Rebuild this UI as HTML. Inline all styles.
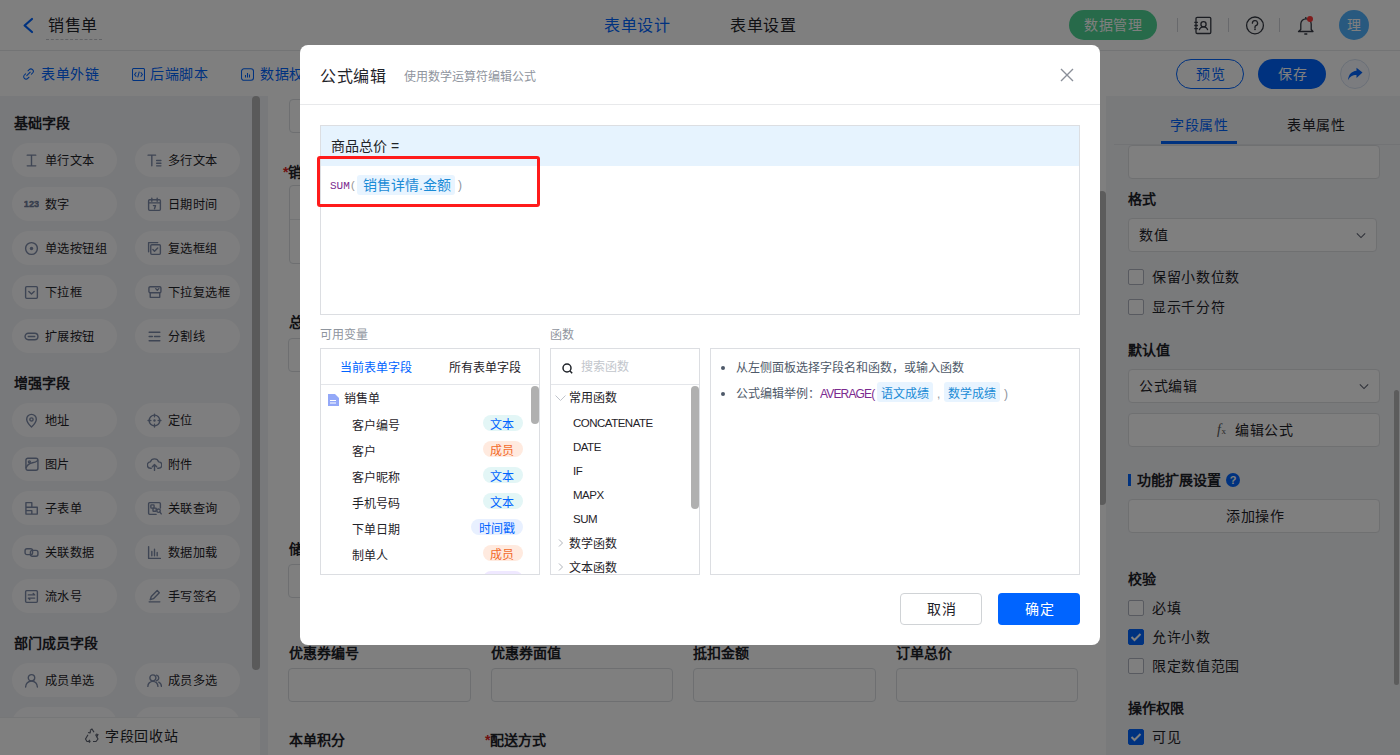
<!DOCTYPE html>
<html lang="zh-CN"><head><meta charset="utf-8">
<style>
*{box-sizing:border-box;margin:0;padding:0}
html,body{width:1400px;height:755px;overflow:hidden}
body{position:relative;font-family:"Liberation Sans",sans-serif;font-size:14px;color:#1f2329;background:#fff}
.abs{position:absolute}
.t{position:absolute;white-space:nowrap;line-height:1}
#hdr{left:0;top:0;width:1400px;height:51px;background:#fff;border-bottom:1px solid #e6e8eb}
#tb{left:0;top:51px;width:1400px;height:45px;background:#fff}
#side{left:0;top:96px;width:268px;height:659px;background:#f1f2f6}
#canvas{left:268px;top:95px;width:838px;height:660px;background:#fff}
#card{display:none}
#right{left:1106px;top:96px;width:294px;height:659px;background:#f2f4f7}
.chip{position:absolute;width:105px;height:34px;border-radius:17px;background:#fdfdfe}
.chip .ic{position:absolute;left:12px;top:9.5px;width:15px;height:15px}
.chip .tx{position:absolute;left:33px;top:11px;font-size:12.2px;letter-spacing:.4px;line-height:14px;color:#1f2329;white-space:nowrap}
.stitle{position:absolute;left:14px;font-size:14px;font-weight:bold;color:#1f2329;line-height:14px}
.inp{position:absolute;border:1px solid #dcdfe3;border-radius:4px;background:#fff}
.flabel{position:absolute;font-size:14px;font-weight:bold;line-height:14px;color:#1f2329;white-space:nowrap}
.req{color:#e02020}
.rlabel{position:absolute;left:1128px;font-size:14px;font-weight:bold;line-height:14px;color:#1f2329}
.rbox{position:absolute;left:1128px;width:252px;height:34px;border:1px solid #dee0e3;border-radius:4px;background:#fff}
.rbox .v{position:absolute;left:10px;top:8px;font-size:14px;letter-spacing:.045em;line-height:16px;color:#1f2329}
.chev{position:absolute;right:10px;top:13px;width:10px;height:7px}
.cb{position:absolute;left:1128px;width:16px;height:16px;border:1px solid #b0b5c0;border-radius:2px;background:#fff}
.cb.on{background:#0064ff;border-color:#0064ff}
.cbt{position:absolute;left:1152px;font-size:14px;letter-spacing:.045em;line-height:16px;color:#1f2329;white-space:nowrap}
#mask{left:0;top:0;width:1400px;height:755px;background:rgba(0,0,0,.5)}
#modal{left:300px;top:45px;width:800px;height:600px;background:#fff;border-radius:8px}
</style></head><body>
<!-- header -->
<div id="hdr" class="abs">
 <svg class="abs" style="left:22px;top:17px" width="13" height="17" viewBox="0 0 13 17"><path d="M10 2L2.6 8.5 10 15" fill="none" stroke="#0064ff" stroke-width="2.2" stroke-linecap="round" stroke-linejoin="round"/></svg>
 <div class="t" style="left:48px;top:18px;font-size:16px;color:#1f2329;letter-spacing:.045em">销售单</div>
 <div class="abs" style="left:46px;top:39px;width:56px;border-top:1px dashed #c4c7cc"></div>
 <div class="t" style="left:604px;top:18px;font-size:16px;color:#0064ff;letter-spacing:.045em">表单设计</div>
 <div class="t" style="left:730px;top:18px;font-size:16px;color:#1f2329;letter-spacing:.045em">表单设置</div>
 <div class="abs" style="left:1069px;top:10px;width:88px;height:30px;border-radius:15px;background:#4ed494"></div>
 <div class="t" style="left:1084px;top:18px;font-size:14px;color:#fff;letter-spacing:.045em">数据管理</div>
 <div class="abs" style="left:1177px;top:18px;width:1px;height:14px;background:#d0d3d8"></div>
 <div class="abs" style="left:1228px;top:18px;width:1px;height:14px;background:#d0d3d8"></div>
 <div class="abs" style="left:1279px;top:18px;width:1px;height:14px;background:#d0d3d8"></div>
 <svg class="abs" style="left:1192px;top:15px" width="21" height="21" viewBox="0 0 21 21" fill="none" stroke="#363a44" stroke-width="1.3"><rect x="4" y="2.3" width="14.8" height="16.2" rx="1.2"/><circle cx="11.5" cy="9.3" r="2.6"/><path d="M7.3 15.2c.5-2.3 2.2-3.4 4.2-3.4s3.7 1.1 4.2 3.4M2.3 7.3h3.6M2.3 10.5h3.6M2.3 13.7h3.6"/></svg>
 <svg class="abs" style="left:1245px;top:16px" width="20" height="20" viewBox="0 0 20 20" fill="none" stroke="#363a44" stroke-width="1.3"><circle cx="10" cy="9.4" r="8.4"/><path d="M7.4 7.2a2.6 2.6 0 1 1 3.5 2.4c-.6.3-.9.7-.9 1.3v1" stroke-linecap="round"/><circle cx="10" cy="13.4" r=".8" fill="#363a44" stroke="none"/></svg>
 <svg class="abs" style="left:1295px;top:14px" width="22" height="22" viewBox="0 0 22 22" fill="none" stroke="#363a44" stroke-width="1.3"><path d="M3.5 17.5h14.5l-1.8-2V10a5.2 5.2 0 0 0-10.4 0v5.5z" stroke-linejoin="round"/><path d="M9.3 20h3M10.8 3v1.7"/><circle cx="15" cy="5" r="3" fill="#ff3838" stroke="none"/></svg>
 <div class="abs" style="left:1339px;top:10px;width:30px;height:30px;border-radius:15px;background:#50b2fe"></div>
 <div class="t" style="left:1347px;top:18px;font-size:14px;color:#fff;letter-spacing:.045em">理</div>
</div>
<!-- toolbar -->
<div id="tb" class="abs">
 <svg class="abs" style="left:22px;top:16px" width="13" height="14" viewBox="0 0 13 14" fill="none" stroke="#0064ff" stroke-width="1.05" stroke-linecap="round"><path d="M4.8 8.6L8.2 5.2"/><path d="M6 3.8l1.2-1.2a2.4 2.4 0 0 1 3.4 3.4L9.4 7.2M7 10.2l-1.2 1.2a2.4 2.4 0 0 1-3.4-3.4L3.6 6.8"/></svg>
 <div class="t" style="left:41px;top:16px;font-size:14px;color:#0064ff;letter-spacing:.045em">表单外链</div>
 <svg class="abs" style="left:132px;top:17px" width="13" height="13" viewBox="0 0 13 13" fill="none" stroke="#0064ff" stroke-width="1.05"><rect x=".5" y=".5" width="12" height="12" rx="1.2"/><path d="M4.3 4.3L2.6 6.5l1.7 2.2M8.7 4.3l1.7 2.2-1.7 2.2M7.3 3.6L5.7 9.4"/></svg>
 <div class="t" style="left:150px;top:16px;font-size:14px;color:#0064ff;letter-spacing:.045em">后端脚本</div>
 <svg class="abs" style="left:241px;top:17px" width="13" height="13" viewBox="0 0 13 13" fill="none" stroke="#0064ff" stroke-width="1.05"><rect x=".5" y=".8" width="12" height="11.5" rx="2.5"/><path d="M4.5 9.5V7M6.5 9.5V5M8.5 9.5V6.5"/></svg>
 <div class="t" style="left:260px;top:16px;font-size:14px;color:#0064ff;letter-spacing:.045em">数据权限</div>
 <div class="abs" style="left:1176px;top:8px;width:68px;height:30px;border:1px solid #0064ff;border-radius:15px;background:#fff"></div>
 <div class="t" style="left:1196px;top:16px;font-size:14px;color:#0064ff;letter-spacing:.045em">预览</div>
 <div class="abs" style="left:1258px;top:8px;width:68px;height:30px;border-radius:15px;background:#0064ff"></div>
 <div class="t" style="left:1278px;top:16px;font-size:14px;color:#fff;letter-spacing:.045em">保存</div>
 <div class="abs" style="left:1340px;top:8px;width:30px;height:30px;border:1px solid #d6e0f0;border-radius:15px;background:#f6f9ff"></div>
 <svg class="abs" style="left:1346px;top:15px" width="18" height="16" viewBox="0 0 18 16"><path d="M10.5 1.7L16.5 6.6 10.5 12V9C6.3 9 4 10.6 2 14.2 2.5 8.6 5.5 5.3 10.5 4.8z" fill="#0064ff"/></svg>
</div>
<!-- sidebar -->
<div id="side" class="abs"></div>
<div class="abs" style="left:252px;top:96px;width:8px;height:574px;border-radius:4px;background:#b5b5b5"></div>
<div class="stitle" style="top:116px">基础字段</div>
<div class="chip" style="left:12px;top:143px"><svg class="ic" viewBox="0 0 14 14" fill="none" stroke="#7d8aa8" stroke-width="1.3" stroke-linecap="round" stroke-linejoin="round"><path d="M3 2h8M3 12h8M7 2v10" /></svg><span class="tx">单行文本</span></div>
<div class="chip" style="left:135px;top:143px"><svg class="ic" viewBox="0 0 14 14" fill="none" stroke="#7d8aa8" stroke-width="1.3" stroke-linecap="round" stroke-linejoin="round"><path d="M1 2h7M4.5 2v10M9 7h4M9 9.5h4M9 12h4" /></svg><span class="tx">多行文本</span></div>
<div class="chip" style="left:12px;top:187px"><svg class="ic" viewBox="0 0 14 14" fill="none" stroke="#7d8aa8" stroke-width="1.3" stroke-linecap="round" stroke-linejoin="round"><text x="-0.2" y="9.5" font-size="8.6" font-weight="bold" fill="#6e7b99" stroke="#6e7b99" stroke-width="0.35" font-family="Liberation Sans">123</text></svg><span class="tx">数字</span></div>
<div class="chip" style="left:135px;top:187px"><svg class="ic" viewBox="0 0 14 14" fill="none" stroke="#7d8aa8" stroke-width="1.3" stroke-linecap="round" stroke-linejoin="round"><rect x="1.5" y="2.5" width="11" height="10" rx="1"/><path d="M1.5 5.5h11M4.5 1v3M9.5 1v3M6 8h2l-1 3"/></svg><span class="tx">日期时间</span></div>
<div class="chip" style="left:12px;top:231px"><svg class="ic" viewBox="0 0 14 14" fill="none" stroke="#7d8aa8" stroke-width="1.3" stroke-linecap="round" stroke-linejoin="round"><circle cx="7" cy="7" r="5.5"/><circle cx="7" cy="7" r="1.6" fill="#7d8aa8" stroke="none"/></svg><span class="tx">单选按钮组</span></div>
<div class="chip" style="left:135px;top:231px"><svg class="ic" viewBox="0 0 14 14" fill="none" stroke="#7d8aa8" stroke-width="1.3" stroke-linecap="round" stroke-linejoin="round"><path d="M1.5 10V1.5H10"/><rect x="3.5" y="3.5" width="9" height="9" rx="1"/><path d="M5.5 8l1.5 1.5 3-3"/></svg><span class="tx">复选框组</span></div>
<div class="chip" style="left:12px;top:275px"><svg class="ic" viewBox="0 0 14 14" fill="none" stroke="#7d8aa8" stroke-width="1.3" stroke-linecap="round" stroke-linejoin="round"><rect x="1.5" y="1.5" width="11" height="11" rx="1"/><path d="M4.5 6l2.5 2.5L9.5 6"/></svg><span class="tx">下拉框</span></div>
<div class="chip" style="left:135px;top:275px"><svg class="ic" viewBox="0 0 14 14" fill="none" stroke="#7d8aa8" stroke-width="1.3" stroke-linecap="round" stroke-linejoin="round"><rect x="1.8" y="1.6" width="11.2" height="5.6" rx="1.2"/><path d="M8.2 3.4l1.4 1.6 1.4-1.6M3 7.2v4.3h8.9V7.2"/></svg><span class="tx">下拉复选框</span></div>
<div class="chip" style="left:12px;top:319px"><svg class="ic" viewBox="0 0 14 14" fill="none" stroke="#7d8aa8" stroke-width="1.3" stroke-linecap="round" stroke-linejoin="round"><rect x="1" y="4" width="12" height="6" rx="3"/><path d="M4 7h6"/></svg><span class="tx">扩展按钮</span></div>
<div class="chip" style="left:135px;top:319px"><svg class="ic" viewBox="0 0 14 14" fill="none" stroke="#7d8aa8" stroke-width="1.3" stroke-linecap="round" stroke-linejoin="round"><path d="M2 3h10M2 7h3M7 7h5M2 11h10"/></svg><span class="tx">分割线</span></div>
<div class="stitle" style="top:376px">增强字段</div>
<div class="chip" style="left:12px;top:403px"><svg class="ic" viewBox="0 0 14 14" fill="none" stroke="#7d8aa8" stroke-width="1.3" stroke-linecap="round" stroke-linejoin="round"><path d="M7 13s-4.5-4.2-4.5-7.2A4.5 4.5 0 0 1 11.5 5.8C11.5 8.8 7 13 7 13z"/><circle cx="7" cy="6" r="1.5"/></svg><span class="tx">地址</span></div>
<div class="chip" style="left:135px;top:403px"><svg class="ic" viewBox="0 0 14 14" fill="none" stroke="#7d8aa8" stroke-width="1.3" stroke-linecap="round" stroke-linejoin="round"><circle cx="7" cy="7" r="5"/><circle cx="7" cy="7" r="1.1" fill="#7d8aa8" stroke="none"/><path d="M7 1v2.6M7 10.4V13M1 7h2.6M10.4 7H13"/></svg><span class="tx">定位</span></div>
<div class="chip" style="left:12px;top:447px"><svg class="ic" viewBox="0 0 14 14" fill="none" stroke="#7d8aa8" stroke-width="1.3" stroke-linecap="round" stroke-linejoin="round"><rect x="1.8" y="1.2" width="11.2" height="11.2" rx="1.8"/><path d="M2 10c1.5-3.5 3.5-4.2 6-4.6 2-.3 3.5-.8 4.6-2"/><circle cx="5" cy="4.5" r=".9"/></svg><span class="tx">图片</span></div>
<div class="chip" style="left:135px;top:447px"><svg class="ic" viewBox="0 0 14 14" fill="none" stroke="#7d8aa8" stroke-width="1.3" stroke-linecap="round" stroke-linejoin="round"><path d="M4 10.5H3.5a3 3 0 0 1-.3-6 4 4 0 0 1 7.6 0 3 3 0 0 1 0 6H10M7 7v5.5M5 9l2-2 2 2"/></svg><span class="tx">附件</span></div>
<div class="chip" style="left:12px;top:491px"><svg class="ic" viewBox="0 0 14 14" fill="none" stroke="#7d8aa8" stroke-width="1.3" stroke-linecap="round" stroke-linejoin="round"><path d="M1.8 12.2V1.5h5.5v4.3M1.8 5.8h10.6v6.4H1.8M1.8 9h5.5v3.2"/></svg><span class="tx">子表单</span></div>
<div class="chip" style="left:135px;top:491px"><svg class="ic" viewBox="0 0 14 14" fill="none" stroke="#7d8aa8" stroke-width="1.3" stroke-linecap="round" stroke-linejoin="round"><path d="M12.5 6.5V2.5a1 1 0 0 0-1-1h-9a1 1 0 0 0-1 1v9a1 1 0 0 0 1 1h6"/><rect x="3.6" y="3.6" width="3" height="3" rx=".5"/><rect x="5.6" y="6.6" width="3" height="3" rx=".5"/><circle cx="10.8" cy="9" r="1.6"/><path d="M12 10.3l1.3 1.7"/></svg><span class="tx">关联查询</span></div>
<div class="chip" style="left:12px;top:535px"><svg class="ic" viewBox="0 0 14 14" fill="none" stroke="#7d8aa8" stroke-width="1.3" stroke-linecap="round" stroke-linejoin="round"><rect x="1" y="3.5" width="7" height="5.5" rx="1.8"/><rect x="6" y="5" width="7" height="5.5" rx="1.8"/></svg><span class="tx">关联数据</span></div>
<div class="chip" style="left:135px;top:535px"><svg class="ic" viewBox="0 0 14 14" fill="none" stroke="#7d8aa8" stroke-width="1.3" stroke-linecap="round" stroke-linejoin="round"><path d="M1.5 1.5v11h11M4.5 10V6M7 10V4M9.5 10V7"/></svg><span class="tx">数据加载</span></div>
<div class="chip" style="left:12px;top:579px"><svg class="ic" viewBox="0 0 14 14" fill="none" stroke="#7d8aa8" stroke-width="1.3" stroke-linecap="round" stroke-linejoin="round"><rect x="1.5" y="1.5" width="11" height="11" rx="1"/><path d="M4 5.5h6L8.6 4.1M10 8.5H4l1.4 1.4"/></svg><span class="tx">流水号</span></div>
<div class="chip" style="left:135px;top:579px"><svg class="ic" viewBox="0 0 14 14" fill="none" stroke="#7d8aa8" stroke-width="1.3" stroke-linecap="round" stroke-linejoin="round"><path d="M2 12h10M3 10l1-3 5.5-5.5 2 2L6 9z"/></svg><span class="tx">手写签名</span></div>
<div class="stitle" style="top:636px">部门成员字段</div>
<div class="chip" style="left:12px;top:663px"><svg class="ic" viewBox="0 0 14 14" fill="none" stroke="#7d8aa8" stroke-width="1.3" stroke-linecap="round" stroke-linejoin="round"><circle cx="7" cy="4.5" r="3"/><path d="M1.5 13a5.5 5.5 0 0 1 11 0"/></svg><span class="tx">成员单选</span></div>
<div class="chip" style="left:135px;top:663px"><svg class="ic" viewBox="0 0 14 14" fill="none" stroke="#7d8aa8" stroke-width="1.3" stroke-linecap="round" stroke-linejoin="round"><circle cx="5.5" cy="4.5" r="2.8"/><path d="M0.8 12.5a4.7 4.7 0 0 1 9.4 0M9 2a2.7 2.7 0 0 1 0 5.2M11 8.5a4.5 4.5 0 0 1 2.5 4"/></svg><span class="tx">成员多选</span></div>
<div class="chip" style="left:12px;top:707px"><svg class="ic" viewBox="0 0 14 14" fill="none" stroke="#7d8aa8" stroke-width="1.3" stroke-linecap="round" stroke-linejoin="round"><circle cx="7" cy="4.5" r="3"/></svg><span class="tx">部门单选</span></div>
<div class="chip" style="left:135px;top:707px"><svg class="ic" viewBox="0 0 14 14" fill="none" stroke="#7d8aa8" stroke-width="1.3" stroke-linecap="round" stroke-linejoin="round"><circle cx="7" cy="4.5" r="3"/></svg><span class="tx">部门多选</span></div>
<div class="abs" style="left:0;top:717px;width:260px;height:38px;background:#fff;border-top:1px solid #eceef1"></div>
<svg class="abs" style="left:84px;top:728px" width="16" height="15" viewBox="0 0 16 15" fill="none" stroke="#5d6270" stroke-width="1.2" stroke-linejoin="round"><path d="M6 2.5l2-1.5 2 3.2M11.5 6.5l2.5 4.5-2 2.5H9M6.5 13.5H3L1.5 11l2.5-4.3M4 4.5l2 .5.5-2M12.5 9.5l1.5-3-2-.5M6 11.8l-1.5 1.5 1.5 1.2"/></svg>
<div class="t" style="left:105px;top:729px;font-size:14px;color:#1f2329;letter-spacing:.045em">字段回收站</div>
<!-- canvas -->
<div id="canvas" class="abs"></div>
<div id="card" class="abs"></div>
<div class="inp" style="left:289px;top:99px;width:200px;height:34px"></div>
<div class="flabel" style="left:283px;top:165px"><span class="req">*</span>销售详情</div>
<div class="inp" style="left:289px;top:185px;width:790px;height:79px"></div>
<div class="abs" style="left:290px;top:219px;width:788px;height:1px;background:#e6e8eb"></div>
<div class="flabel" style="left:289px;top:315px">总价</div>
<div class="inp" style="left:288px;top:338px;width:183px;height:34px"></div>
<div class="flabel" style="left:289px;top:542px">储值</div>
<div class="inp" style="left:288px;top:564px;width:183px;height:34px"></div>
<div class="flabel" style="left:289px;top:646px">优惠券编号</div>
<div class="flabel" style="left:491px;top:646px">优惠券面值</div>
<div class="flabel" style="left:693px;top:646px">抵扣金额</div>
<div class="flabel" style="left:896px;top:646px">订单总价</div>
<div class="inp" style="left:288px;top:668px;width:183px;height:34px"></div>
<div class="inp" style="left:491px;top:668px;width:182px;height:34px"></div>
<div class="inp" style="left:693px;top:668px;width:183px;height:34px"></div>
<div class="inp" style="left:896px;top:668px;width:182px;height:34px"></div>
<div class="flabel" style="left:289px;top:733px">本单积分</div>
<div class="flabel" style="left:485px;top:733px"><span class="req">*</span>配送方式</div>
<div class="abs" style="left:1098px;top:191px;width:8px;height:314px;border-radius:4px;background:#b9b9b9"></div>
<!-- right panel -->
<div id="right" class="abs"></div>
<div class="t" style="left:1170px;top:118px;font-size:14px;color:#0064ff;letter-spacing:.045em">字段属性</div>
<div class="t" style="left:1287px;top:118px;font-size:14px;color:#1f2329;letter-spacing:.045em">表单属性</div>
<div class="abs" style="left:1114px;top:144px;width:286px;height:1px;background:#e4e6ea"></div>
<div class="abs" style="left:1161px;top:141px;width:76px;height:3px;background:#0064ff"></div>
<div class="rbox" style="top:145px;height:34px"></div>
<div class="rlabel" style="top:192px">格式</div>
<div class="rbox" style="top:218px;width:249px"><span class="v">数值</span><svg class="chev" viewBox="0 0 12 8"><path d="M1 1.5l5 5 5-5" fill="none" stroke="#5d6270" stroke-width="1.3"/></svg></div>
<div class="cb" style="top:269px"></div><div class="cbt" style="top:269px">保留小数位数</div>
<div class="cb" style="top:299px"></div><div class="cbt" style="top:299px">显示千分符</div>
<div class="rlabel" style="top:343px">默认值</div>
<div class="rbox" style="top:369px"><span class="v">公式编辑</span><svg class="chev" viewBox="0 0 12 8"><path d="M1 1.5l5 5 5-5" fill="none" stroke="#5d6270" stroke-width="1.3"/></svg></div>
<div class="rbox" style="top:413px"><span class="t" style="left:88px;top:9px;font-size:14px;font-style:italic;font-family:'Liberation Serif',serif;color:#555;letter-spacing:.045em">f<span style="font-size:9px;font-style:normal">x</span></span><span class="v" style="left:106px">编辑公式</span></div>
<div class="abs" style="left:1128px;top:474px;width:3px;height:12px;background:#0064ff"></div>
<div class="rlabel" style="left:1137px;top:473px">功能扩展设置</div>
<div class="abs" style="left:1226px;top:473px;width:14px;height:14px;border-radius:7px;background:#0064ff;color:#fff;font-size:11px;font-weight:bold;line-height:14px;text-align:center">?</div>
<div class="rbox" style="top:499px"><span class="v" style="left:97px">添加操作</span></div>
<div class="rlabel" style="top:572px">校验</div>
<div class="cb" style="top:600px"></div><div class="cbt" style="top:600px">必填</div>
<div class="cb on" style="top:629px"><svg width="14" height="14" viewBox="0 0 14 14" style="position:absolute;left:0;top:0"><path d="M2.5 7l3 3 6-6" fill="none" stroke="#fff" stroke-width="2"/></svg></div><div class="cbt" style="top:629px">允许小数</div>
<div class="cb" style="top:658px"></div><div class="cbt" style="top:658px">限定数值范围</div>
<div class="rlabel" style="top:701px">操作权限</div>
<div class="cb on" style="top:729px"><svg width="14" height="14" viewBox="0 0 14 14" style="position:absolute;left:0;top:0"><path d="M2.5 7l3 3 6-6" fill="none" stroke="#fff" stroke-width="2"/></svg></div><div class="cbt" style="top:729px">可见</div>
<div class="abs" style="left:1394px;top:390px;width:5px;height:295px;border-radius:3px;background:#b8b8b8"></div>
<!-- mask -->
<div id="mask" class="abs"></div>
<div id="modal" class="abs">
 <div class="t" style="left:20px;top:24px;font-size:16px;color:#1f2329;letter-spacing:.045em">公式编辑</div>
 <div class="t" style="left:104px;top:26px;font-size:12px;color:#8f959e">使用数学运算符编辑公式</div>
 <svg class="abs" style="left:759px;top:22px" width="16" height="16" viewBox="0 0 16 16"><path d="M2 2l12 12M14 2L2 14" stroke="#8a8f99" stroke-width="1.4"/></svg>
 <div class="abs" style="left:0;top:59px;width:800px;height:1px;background:#e8e9eb"></div>
 <!-- formula box -->
 <div class="abs" style="left:20px;top:80px;width:760px;height:190px;border:1px solid #dcdee2"></div>
 <div class="abs" style="left:21px;top:81px;width:758px;height:40px;background:#e6f3fe"></div>
 <div class="t" style="left:31px;top:94px;font-size:14px;color:#1f2329">商品总价 =</div>
 <div class="t" style="left:30px;top:136px;font-size:11px;font-family:'Liberation Mono',monospace;color:#7b2a8f">SUM<span style="color:#999">(</span></div>
 <div class="abs" style="left:57px;top:130px;width:98px;height:20px;border-radius:3px;background:#e8f4ff"></div>
 <div class="t" style="left:63px;top:133px;font-size:14px;color:#1a8bd6">销售详情.金额</div>
 <div class="t" style="left:158px;top:134px;font-size:12px;color:#8f959e">)</div>
 <div class="abs" style="left:17px;top:111px;width:223px;height:51px;border:3px solid #ff1b1b;border-radius:3px"></div>
 <!-- labels -->
 <div class="t" style="left:20px;top:284px;font-size:12px;color:#8f959e">可用变量</div>
 <div class="t" style="left:250px;top:284px;font-size:12px;color:#8f959e">函数</div>
 <!-- var panel -->
 <div class="abs" style="left:20px;top:303px;width:220px;height:227px;border:1px solid #dcdee2;overflow:hidden">
  <div class="t" style="left:19px;top:13px;font-size:12px;color:#0064ff">当前表单字段</div>
  <div class="t" style="left:128px;top:13px;font-size:12px;color:#1f2329">所有表单字段</div>
  <div class="abs" style="left:0;top:35px;width:218px;height:1px;background:#e4e6ea"></div>
  <svg class="abs" style="left:7px;top:45px" width="11" height="12" viewBox="0 0 11 12"><path d="M0 0h7l4 4v8H0z" fill="#93a8f8"/><path d="M2 6.5h6M2 9h6" stroke="#fff" stroke-width="1.2"/></svg>
  <div class="t" style="left:23px;top:44px;font-size:12px;color:#1f2329">销售单</div>
  <div class="t" style="left:31px;top:71px;font-size:12px;color:#1f2329">客户编号</div>
  <div class="abs" style="left:162px;top:66px;width:40px;height:16px;border-radius:8px;background:#e3f6f6"></div>
  <div class="t" style="left:169px;top:70px;font-size:12px;color:#0064ff">文本</div>
  <div class="t" style="left:31px;top:97px;font-size:12px;color:#1f2329">客户</div>
  <div class="abs" style="left:162px;top:92px;width:40px;height:16px;border-radius:8px;background:#ffeadf"></div>
  <div class="t" style="left:169px;top:96px;font-size:12px;color:#f26b2b">成员</div>
  <div class="t" style="left:31px;top:123px;font-size:12px;color:#1f2329">客户昵称</div>
  <div class="abs" style="left:162px;top:118px;width:40px;height:16px;border-radius:8px;background:#e3f6f6"></div>
  <div class="t" style="left:169px;top:122px;font-size:12px;color:#0064ff">文本</div>
  <div class="t" style="left:31px;top:149px;font-size:12px;color:#1f2329">手机号码</div>
  <div class="abs" style="left:162px;top:144px;width:40px;height:16px;border-radius:8px;background:#e3f6f6"></div>
  <div class="t" style="left:169px;top:148px;font-size:12px;color:#0064ff">文本</div>
  <div class="t" style="left:31px;top:175px;font-size:12px;color:#1f2329">下单日期</div>
  <div class="abs" style="left:150px;top:170px;width:52px;height:16px;border-radius:8px;background:#e8f0ff"></div>
  <div class="t" style="left:158px;top:174px;font-size:12px;color:#0064ff">时间戳</div>
  <div class="t" style="left:31px;top:201px;font-size:12px;color:#1f2329">制单人</div>
  <div class="abs" style="left:162px;top:196px;width:40px;height:16px;border-radius:8px;background:#ffeadf"></div>
  <div class="t" style="left:169px;top:200px;font-size:12px;color:#f26b2b">成员</div>
  <div class="abs" style="left:162px;top:222px;width:40px;height:16px;border-radius:8px;background:#efe8ff"></div>
  <div class="abs" style="left:210px;top:37px;width:8px;height:38px;border-radius:4px;background:#b0b0b0"></div>
 </div>
 <!-- func panel -->
 <div class="abs" style="left:250px;top:303px;width:150px;height:227px;border:1px solid #dcdee2;overflow:hidden">
  <svg class="abs" style="left:11px;top:14px" width="11" height="11" viewBox="0 0 11 11" fill="none" stroke="#1f2329" stroke-width="1.5"><circle cx="5" cy="5" r="4"/><path d="M8 8l2.2 2.2"/></svg>
  <div class="t" style="left:30px;top:12px;font-size:12px;color:#c2c6cc">搜索函数</div>
  <div class="abs" style="left:0;top:35px;width:148px;height:1px;background:#e4e6ea"></div>
  <svg class="abs" style="left:4px;top:46px" width="11" height="7" viewBox="0 0 11 7"><path d="M.5 .5l5 5 5-5" fill="none" stroke="#c0c4cc" stroke-width="1"/></svg>
  <div class="t" style="left:18px;top:43px;font-size:12px;color:#1f2329">常用函数</div>
  <div class="t" style="left:22px;top:69px;font-size:11.5px;letter-spacing:-0.5px;color:#1f2329">CONCATENATE</div>
  <div class="t" style="left:22px;top:93px;font-size:11.5px;letter-spacing:-0.5px;color:#1f2329">DATE</div>
  <div class="t" style="left:22px;top:117px;font-size:11.5px;letter-spacing:-0.5px;color:#1f2329">IF</div>
  <div class="t" style="left:22px;top:141px;font-size:11.5px;letter-spacing:-0.5px;color:#1f2329">MAPX</div>
  <div class="t" style="left:22px;top:165px;font-size:11.5px;letter-spacing:-0.5px;color:#1f2329">SUM</div>
  <svg class="abs" style="left:7px;top:189px" width="6" height="10" viewBox="0 0 6 10"><path d="M1 1.5l3.5 3.5L1 8.5" fill="none" stroke="#b0b4bb" stroke-width="1"/></svg>
  <div class="t" style="left:18px;top:189px;font-size:12px;color:#1f2329">数学函数</div>
  <svg class="abs" style="left:7px;top:213px" width="6" height="10" viewBox="0 0 6 10"><path d="M1 1.5l3.5 3.5L1 8.5" fill="none" stroke="#b0b4bb" stroke-width="1"/></svg>
  <div class="t" style="left:18px;top:213px;font-size:12px;color:#1f2329">文本函数</div>
  <div class="abs" style="left:140px;top:37px;width:8px;height:123px;border-radius:4px;background:#b0b0b0"></div>
 </div>
 <!-- desc panel -->
 <div class="abs" style="left:410px;top:303px;width:370px;height:227px;border:1px solid #dcdee2;overflow:hidden">
  <div class="abs" style="left:10px;top:17px;width:4px;height:4px;border-radius:2px;background:#4e5969"></div>
  <div class="t" style="left:25px;top:13px;font-size:12px;color:#4e5969">从左侧面板选择字段名和函数，或输入函数</div>
  <div class="abs" style="left:10px;top:43px;width:4px;height:4px;border-radius:2px;background:#4e5969"></div>
  <div class="t" style="left:25px;top:39px;font-size:12px;color:#4e5969">公式编辑举例：<span style="color:#7b2a8f;letter-spacing:-0.85px">AVERAGE(</span></div>
  <div class="abs" style="left:166px;top:33px;width:56px;height:20px;border-radius:3px;background:#e8f4ff"></div>
  <div class="t" style="left:170px;top:39px;font-size:12px;color:#1a8bd6">语文成绩</div>
  <div class="t" style="left:226px;top:39px;font-size:12px;color:#8f959e">,</div>
  <div class="abs" style="left:233px;top:33px;width:56px;height:20px;border-radius:3px;background:#e8f4ff"></div>
  <div class="t" style="left:237px;top:39px;font-size:12px;color:#1a8bd6">数学成绩</div>
  <div class="t" style="left:293px;top:39px;font-size:12px;color:#8f959e">)</div>
 </div>
 <div class="abs" style="left:600px;top:548px;width:82px;height:32px;border:1px solid #d0d3d6;border-radius:4px;background:#fff"></div>
 <div class="t" style="left:627px;top:557px;font-size:14px;color:#1f2329;letter-spacing:.045em">取消</div>
 <div class="abs" style="left:698px;top:548px;width:82px;height:32px;border-radius:4px;background:#0064ff"></div>
 <div class="t" style="left:725px;top:557px;font-size:14px;color:#fff;letter-spacing:.045em">确定</div>
</div>

</body></html>
